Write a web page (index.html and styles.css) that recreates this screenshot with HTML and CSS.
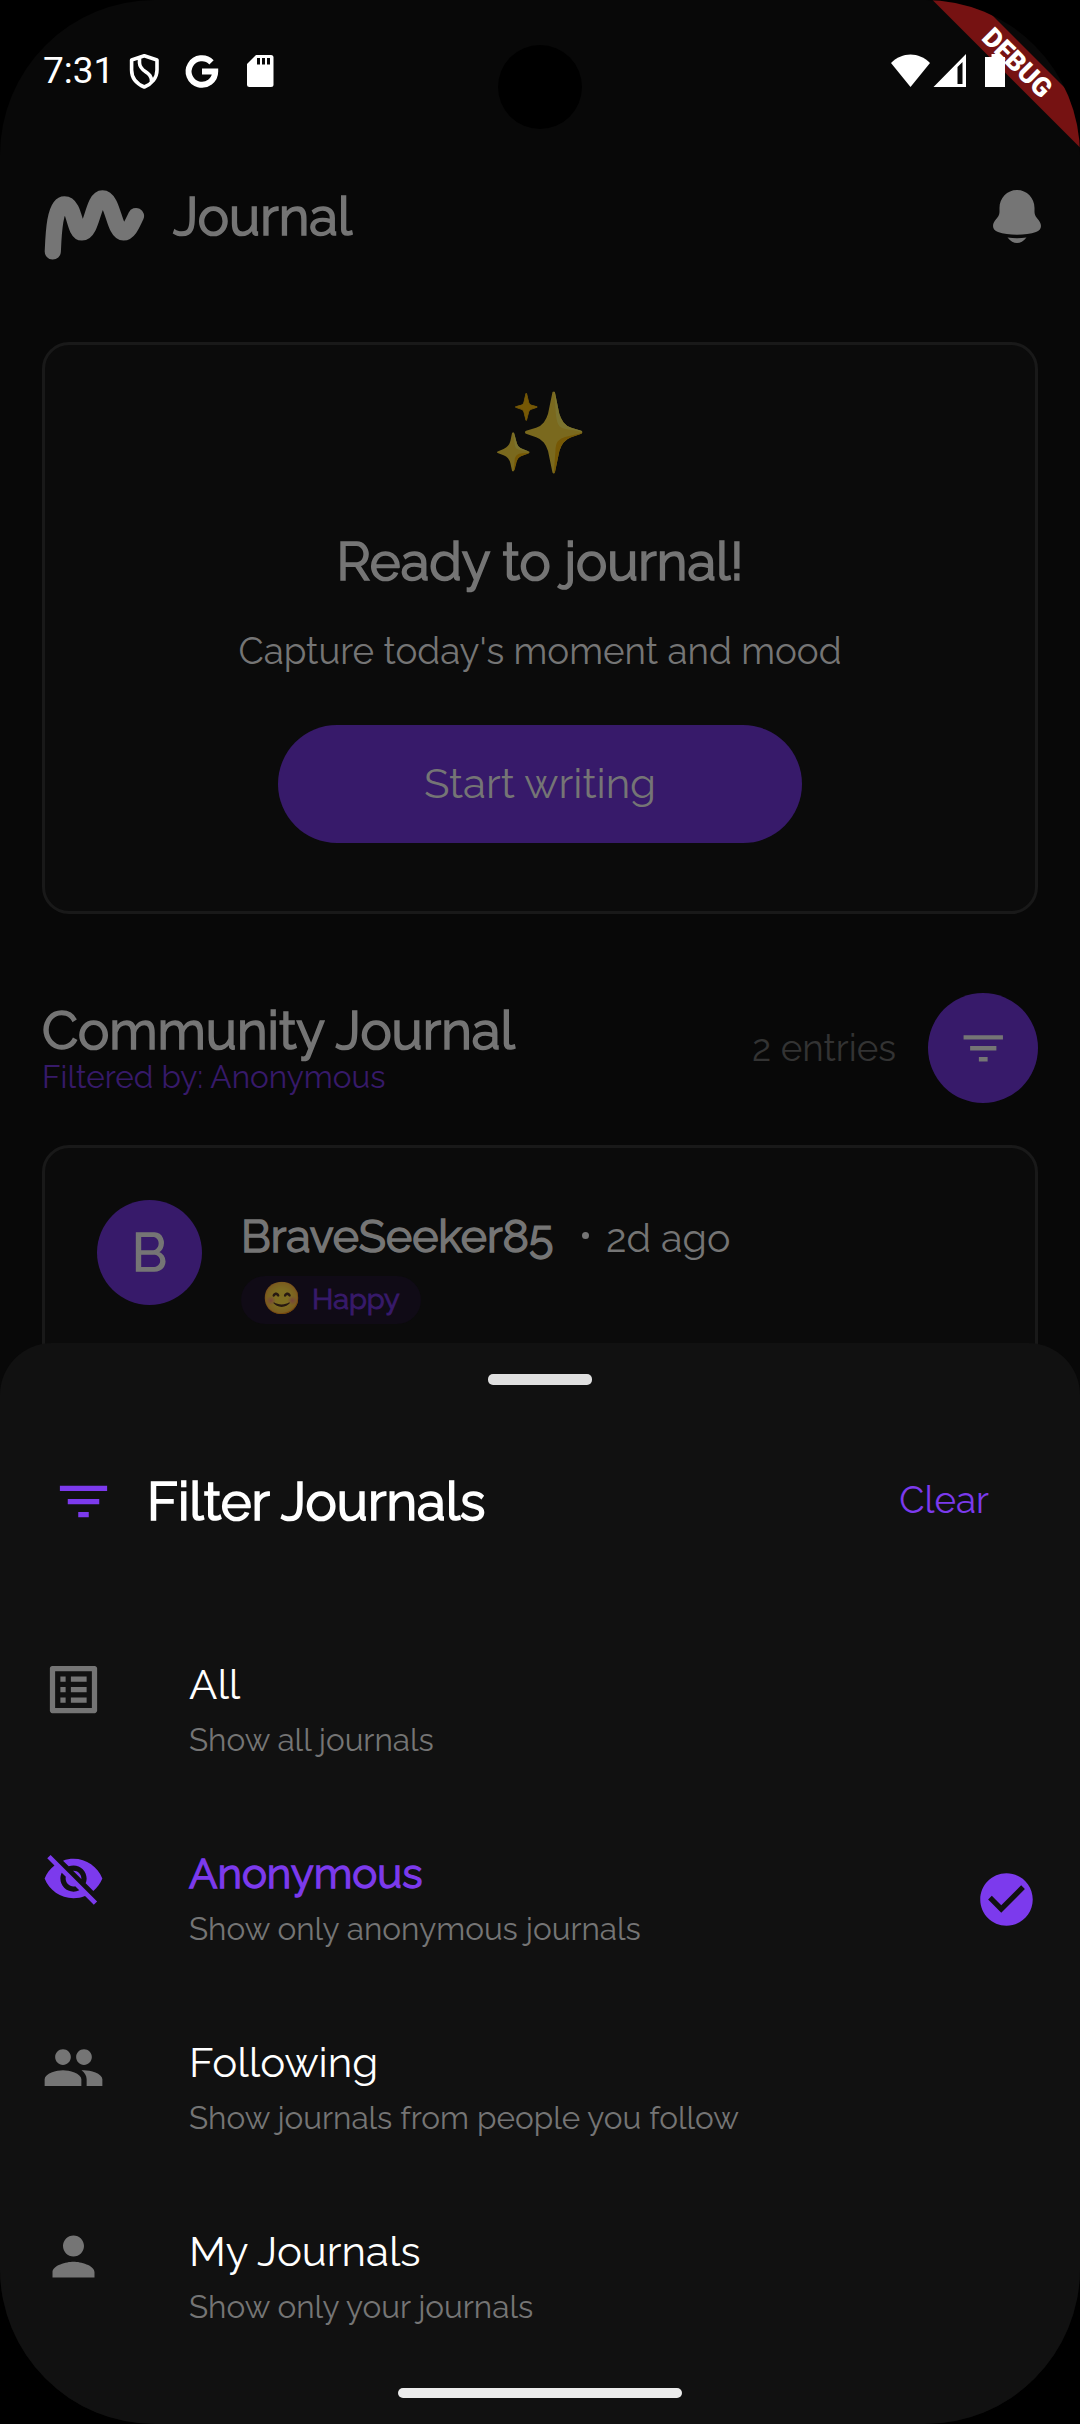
FILE: index.html
```html
<!DOCTYPE html>
<html lang="en">
<head>
<meta charset="utf-8">
<title>Journal</title>
<link rel="stylesheet" href="styles.css">
</head>
<body>
<div class="screen">
  <div class="status-bar">
    <span class="clock">7:31</span>
    <svg class="status-left" viewBox="120 45 160 50" width="160" height="50">
      <path d="M144.300 55.800 L157 60 V70 C157 78 151.500 84 144.300 87 C137 84 131.600 78 131.600 70 V60 Z M139.500 58 V63 C140 73 152.500 71 151.500 82" fill="none" stroke="#fff" stroke-width="3.600" stroke-linejoin="round"/>
      <path d="M211.500 62.300 A13.300 13.300 0 1 0 215.200 71.500 H202" fill="none" stroke="#fff" stroke-width="6"/>
      <path d="M256 55 H271 a2.500 2.500 0 0 1 2.500 2.500 V84.500 a2.500 2.500 0 0 1 -2.500 2.500 H249.500 a2.500 2.500 0 0 1 -2.500 -2.500 V64 Z" fill="#fff"/>
      <path d="M257 58h3v6.500h-3zM262 58h3v6.500h-3zM267 58h3v6.500h-3z" fill="#080808"/>
    </svg>
    <svg class="status-right" viewBox="885 45 125 50" width="125" height="50">
      <path d="M891 63 C902 51.500 919 51.500 930 63 L910.500 87 Z" fill="#fff"/>
      <path fill-rule="evenodd" d="M966 54 V87 H933.500 Z M957.500 67 V84 H962.500 V62 Z" fill="#fff"/>
      <path d="M991.500 54 H999 V57 H1005 V87 H985 V57 H991.500 Z" fill="#fff"/>
    </svg>
  </div>

  <header class="app-bar">
    <svg class="logo" viewBox="42 142 104 149" width="104" height="149">
      <path d="M52.800 251.500 C53.500 236 54.500 204.300 64.500 204.300 C75 204.300 74 232.500 82 232.500 C92 232.500 93 198.300 102.500 198.300 C113 198.300 114 232.500 123.500 232.500 C129 232.500 132.500 223 136 216" fill="none" stroke="#757575" stroke-width="16.200" stroke-linecap="round" stroke-linejoin="round"/>
    </svg>
    <h1 class="title">Journal</h1>
    <svg class="bell" viewBox="993 190 48 53" width="48" height="53">
      <path d="M1017 190 C1027 190 1034.500 198 1034.500 208 V212 C1034.500 218 1041 220 1041 226 C1041 229 1039 231 1036 232 C1026 235.500 1008 235.500 998 232 C995 231 993 229 993 226 C993 220 999.500 218 999.500 212 V208 C999.500 198 1007 190 1017 190 Z M1007.500 237.500 Q1017 239 1026.500 237.500 Q1022 243 1017 243 Q1012 243 1007.500 237.500 Z" fill="#757575"/>
    </svg>
  </header>

  <main class="content">
    <section class="card prompt">
      <div class="sparkles">✨</div>
      <h2 class="title">Ready to journal!</h2>
      <p class="prompt-text">Capture today's moment and mood</p>
      <div class="button">Start writing</div>
    </section>

    <section class="section-head">
      <div class="section-text">
        <h2 class="title">Community Journal</h2>
        <p class="filtered">Filtered by: Anonymous</p>
      </div>
      <span class="count">2 entries</span>
      <div class="filter-button">
        <svg viewBox="0 0 24 24" width="52.500" height="52.500"><path fill="#757575" d="M10 18h4v-2h-4v2zM3 6v2h18V6H3zm3 7h12v-2H6v2z"/></svg>
      </div>
    </section>

    <article class="card entry">
      <div class="avatar">B</div>
      <div class="entry-body">
        <div class="entry-meta">
          <span class="name">BraveSeeker85</span>
          <span class="dot"></span>
          <span class="ago">2d ago</span>
        </div>
        <div class="mood"><span class="face">😊</span><span class="mood-name">Happy</span></div>
      </div>
    </article>
  </main>

  <section class="sheet">
    <div class="handle"></div>
    <div class="sheet-head">
      <svg viewBox="0 0 24 24" width="63" height="63"><path fill="#7c3aed" d="M10 18h4v-2h-4v2zM3 6v2h18V6H3zm3 7h12v-2H6v2z"/></svg>
      <h2 class="title">Filter Journals</h2>
      <span class="clear">Clear</span>
    </div>
    <ul class="options">
      <li class="option">
        <svg viewBox="0 0 24 24" width="63" height="63"><path fill="#757575" d="M19 5v14H5V5h14m1.100-2H3.900c-.5 0-.9.4-.9.9v16.200c0 .4.4.9.9.9h16.200c.4 0 .9-.5.9-.9V3.900c0-.5-.5-.9-.9-.9zM11 7h6v2h-6V7zm0 4h6v2h-6v-2zm0 4h6v2h-6zM7 7h2v2H7zm0 4h2v2H7zm0 4h2v2H7z"/></svg>
        <div class="option-text"><p class="label">All</p><p class="hint">Show all journals</p></div>
      </li>
      <li class="option selected">
        <svg viewBox="0 0 24 24" width="63" height="63"><path fill="#7c3aed" d="M12 7c2.760 0 5 2.240 5 5 0 .65-.13 1.260-.36 1.830l2.920 2.920c1.510-1.260 2.700-2.890 3.430-4.750-1.730-4.390-6-7.500-11-7.500-1.400 0-2.740.25-3.980.7l2.160 2.160C10.740 7.130 11.350 7 12 7zM2 4.270l2.280 2.280.46.46C3.080 8.300 1.780 10.020 1 12c1.730 4.390 6 7.500 11 7.500 1.550 0 3.030-.3 4.380-.84l.42.42L19.730 22 21 20.730 3.270 3 2 4.270zM7.530 9.800l1.550 1.550c-.05.21-.08.43-.08.65 0 1.660 1.340 3 3 3 .22 0 .44-.03.65-.08l1.550 1.550c-.67.33-1.410.53-2.200.53-2.760 0-5-2.240-5-5 0-.79.2-1.530.53-2.200zm4.310-.78l3.150 3.150.02-.16c0-1.660-1.340-3-3-3l-.17.01z"/></svg>
        <div class="option-text"><p class="label">Anonymous</p><p class="hint">Show only anonymous journals</p></div>
        <svg class="check" viewBox="0 0 24 24" width="63" height="63"><path fill="#7c3aed" d="M12 2C6.480 2 2 6.480 2 12s4.480 10 10 10 10-4.480 10-10S17.520 2 12 2zm-2 15l-5-5 1.410-1.410L10 14.170l7.590-7.590L19 8l-9 9z"/></svg>
      </li>
      <li class="option">
        <svg viewBox="0 0 24 24" width="63" height="63"><path fill="#757575" d="M16 11c1.660 0 2.990-1.340 2.990-3S17.660 5 16 5c-1.660 0-3 1.340-3 3s1.340 3 3 3zm-8 0c1.660 0 2.990-1.340 2.990-3S9.660 5 8 5C6.340 5 5 6.340 5 8s1.340 3 3 3zm0 2c-2.330 0-7 1.170-7 3.500V19h14v-2.500c0-2.330-4.670-3.500-7-3.500zm8 0c-.29 0-.62.02-.97.05 1.160.84 1.970 1.970 1.970 3.450V19h6v-2.500c0-2.330-4.670-3.500-7-3.500z"/></svg>
        <div class="option-text"><p class="label">Following</p><p class="hint">Show journals from people you follow</p></div>
      </li>
      <li class="option">
        <svg viewBox="0 0 24 24" width="63" height="63"><path fill="#757575" d="M12 12c2.210 0 4-1.790 4-4s-1.790-4-4-4-4 1.790-4 4 1.790 4 4 4zm0 2c-2.670 0-8 1.340-8 4v2h16v-2c0-2.660-5.330-4-8-4z"/></svg>
        <div class="option-text"><p class="label">My Journals</p><p class="hint">Show only your journals</p></div>
      </li>
    </ul>
  </section>

  <svg class="debug" viewBox="0 0 160 160" width="160" height="160">
    <path d="M12.500 0 H57 L160 103 V147.500 Z" fill="#761212"/>
    <text class="debug-text" transform="translate(97.500 62.500) rotate(45)" x="0" y="9.500" text-anchor="middle">DEBUG</text>
    <path d="M71.500 54 H79 V57 H85 V87 H65 V57 H71.500 Z" fill="#fff"/>
  </svg>
  <div class="camera"></div>
  <div class="home-bar"></div>
</div>
</body>
</html>
```
FILE: styles.css
```css
* { box-sizing: border-box; margin: 0; padding: 0; }
body { background: #000; font-family: Raleway, Lato, sans-serif; }
svg { display: block; flex: none; }

.screen {
  position: relative;
  width: 1080px;
  height: 2424px;
  overflow: hidden;
  border-radius: 155px;
  background: #080808;
  color: #757575;
}

.title {
  font-size: 52.500px;
  line-height: 62px;
  font-weight: 400;
  white-space: nowrap;
  -webkit-text-stroke: 1.700px currentColor;
}

/* Status bar */
.status-bar { display: flex; align-items: center; height: 140px; padding: 0 70px 0 43px; }
.clock { width: 77px; padding-top: 2px; font: 400 37px/44px Roboto, sans-serif; color: #fff; }
.status-right { margin-left: auto; }

/* App bar */
.app-bar { display: flex; align-items: center; height: 151px; padding: 2px 39px 0 42px; }
.app-bar .title { margin-left: 27px; }
.bell { margin-left: auto; }

/* Content */
.content { padding: 51px 42px 0; }
.card { border: 3px solid #191919; border-radius: 27px; background: #0b0b0b; }
.prompt {
  display: flex;
  flex-direction: column;
  align-items: center;
  height: 572px;
  padding-top: 40px;
}
.sparkles { height: 96px; font: 78.500px/96px "Noto Color Emoji", sans-serif; color: #fff; opacity: .46; }
.prompt .title { margin-top: 50px; }
.prompt-text { margin-top: 36px; font-size: 36.750px; line-height: 44px; }
.button {
  width: 524px;
  margin-top: 52px;
  border-radius: 59px;
  background: #371a6a;
  font-size: 42px;
  line-height: 118px;
  text-align: center;
}

.section-head { display: flex; align-items: center; height: 110px; margin-top: 79px; }
.section-text { padding-top: 1px; }
.section-text .title { line-height: 57px; }
.filtered { font-size: 31.500px; line-height: 36px; color: #371a6a; }
.count { margin-left: auto; font-size: 36.750px; color: #333; }
.filter-button {
  display: flex;
  align-items: center;
  justify-content: center;
  width: 110px;
  height: 110px;
  margin-left: 32px;
  border-radius: 55px;
  background: #371a6a;
}

.entry { display: flex; height: 500px; margin-top: 42px; padding: 52px; }
.avatar {
  width: 105px;
  height: 105px;
  border-radius: 50%;
  background: #371a6a;
  font-size: 52.500px;
  line-height: 106px;
  text-align: center;
  -webkit-text-stroke: 1.700px currentColor;
}
.entry-body { margin: 7px 0 0 39px; }
.entry-meta { display: flex; align-items: baseline; line-height: 56px; }
.name { width: 313px; font-size: 44.625px; line-height: 58px; -webkit-text-stroke: 1.500px currentColor; }
.dot { width: 7px; height: 7px; margin: 0 17px 0 28px; border-radius: 50%; background: #757575; transform: translateY(-13px); }
.ago { font-size: 39.400px; }
.mood {
  display: flex;
  align-items: center;
  width: 180px;
  height: 48px;
  margin-top: 10px;
  padding-left: 21px;
  border-radius: 24px;
  background: #100b16;
  color: #371a6a;
  font-size: 28.900px;
}
.mood-name { line-height: 44px; padding-bottom: 3px; -webkit-text-stroke: 1px currentColor; }
.face { width: 50px; padding-bottom: 3px; font: 31.500px/44px "Noto Color Emoji", sans-serif; color: #fff; opacity: .46; }

/* Bottom sheet */
.sheet {
  position: absolute;
  inset: 1343px 0 0;
  padding-top: 31px;
  border-radius: 52px 52px 0 0;
  background: #111;
  color: #fff;
}
.handle { width: 104px; height: 11px; margin: 0 auto; border-radius: 5px; background: #e0e0e0; }
.sheet-head { display: flex; align-items: center; height: 120px; margin-top: 56px; padding: 0 91px 0 52px; }
.sheet-head .title { margin-left: 32px; padding-top: 1px; }
.clear { margin: -2px 0 0 auto; font-size: 36.750px; color: #7c3aed; }
.options { margin-top: 55px; list-style: none; }
.option { display: flex; height: 189px; padding: 42px 42px 0; }
.option-text { margin: 2px 0 0 84px; }
.label { font-size: 42px; line-height: 50px; }
.hint { margin-top: 10px; font-size: 31.500px; line-height: 40px; color: #757575; }
.selected .label { color: #7c3aed; -webkit-text-stroke: 1.300px currentColor; }
.check { margin: 21px 0 0 auto; }

/* System overlays */
.debug { position: absolute; top: 0; right: 0; }
.debug-text { font: 900 26.800px Roboto, sans-serif; fill: #fff; }
.camera { position: absolute; left: 498px; top: 45px; width: 84px; height: 84px; border-radius: 50%; background: #000; }
.home-bar { position: absolute; left: 398px; top: 2388px; width: 284px; height: 10px; border-radius: 5px; background: #ececec; }
```
